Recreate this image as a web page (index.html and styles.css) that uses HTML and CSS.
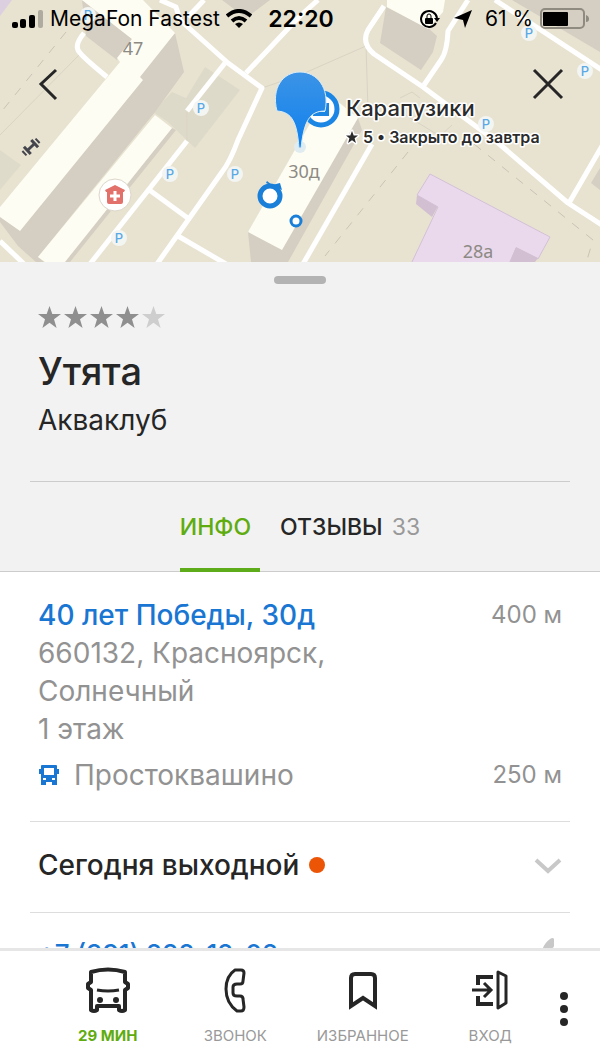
FILE: index.html
```html
<!DOCTYPE html>
<html lang="ru">

<head>
  <meta charset="UTF-8">
  <meta name="viewport" content="width=device-width, initial-scale=1.0">
  <title>Утята, акваклуб</title>
  <link rel="stylesheet" href="styles.css">
</head>

<body>
  <div class="map">
    <svg class="map-canvas" viewBox="0 0 600 262">
      <defs>
        <linearGradient id="pinFill" x1="0" y1="0" x2="0" y2="1">
          <stop offset="0" stop-color="#3c94e6" />
          <stop offset="1" stop-color="#0e80ee" />
        </linearGradient>
        <g id="parking">
          <circle r="8" fill="#f3f5f2" />
          <text y="5" text-anchor="middle">P</text>
        </g>
      </defs>

      <rect width="600" height="262" fill="#e8e3d1" />
      <path d="M0 0H12L0 16Z" fill="#dccfe0" />
      <path d="M0 150L21 165L0 190Z" fill="#dfdbca" />
      <path d="M205 67L240 90L195 148L168 122L153 112L172 92L186 98Z" fill="#dedac9" />

      <!-- paths and kerbs -->
      <g class="kerb">
        <path d="M82 52L0 135" />
        <path d="M187 112V141" />
        <path d="M262 88L300 75L366 46L368 110" />
        <path d="M400 98L412 92L420 98M395 108L410 118L440 136L452 125" />
      </g>
      <g class="footpath">
        <path d="M66 32L2 111" />
        <path d="M408 152L325 256" />
        <path d="M474 144L593 240L587 260" />
      </g>

      <!-- roads -->
      <g class="road">
        <path d="M160 0L176 7L180 20L228 63L262 88L238 140Q230 162 222 172L157 264" />
        <path d="M204 0L188 17" />
        <path d="M246 73L300 16L318 0" />
        <path d="M225 63L187 111" />
        <path d="M84 33Q75 44 78 50Q80 55 107 77" />
        <path d="M187 141L90 264" />
        <path d="M148 189L189 219" />
        <path d="M178 236L226 264" />
        <path d="M0 241L24 264" />
        <path d="M384 6L368 30Q361 43 374 54L423 87L497 142L568 203L602 225" />
        <path d="M468 0L448 31Q447 52 441 60L424 85" />
        <path d="M495 0L602 70" />
        <path d="M569 203L602 146" />
        <path d="M372 144L303 264" />
      </g>

      <!-- buildings -->
      <g fill="#d5cec2">
        <path d="M82 0L132 39L117 60L86 36Z" />
        <path d="M175 33L184 72L155 112L38 257L44 262H36L18 246L0 222V217L20 200Z" />
        <path d="M172 128L176 130L70 262H64Z" />
        <path d="M222 0H270L246 18Z" />
        <path d="M386 7L428 28L437 36L433 52L421 70L380 43Z" />
        <path d="M512 0H600V52Z" />
        <path d="M600 168L591 183L600 190Z" />
        <path d="M358 118L362 130L288 262H251L248 232Z" />
      </g>
      <g fill="#fdfdf3">
        <path d="M82 0H143L175 33L140 77L143 80L20 231L0 217V207L120 62L117 58L132 39Z" />
        <path d="M155 115L172 128L65 262H45L38 257Z" />
        <path d="M387 0H445L443 12L428 29L387 7Z" />
        <path d="M320 106L336 100L358 118L282 250L248 232Z" />
      </g>
      <path d="M417 195L438 206L432 217L416 204Z" fill="#d2bfd1" />
      <path d="M430 174L550 237L538 259L516 248L509 264H411L438 207L417 195Z" fill="#ead9ec" stroke="#d3c0d6" />
      <path d="M516 247L538 258L535 262H510Z" fill="#d2bfd1" />

      <g class="house-number">
        <text x="133" y="55">47</text>
        <text x="304" y="178">30д</text>
        <text x="478" y="258">28а</text>
      </g>

      <g class="parking">
        <use href="#parking" x="88" y="15" />
        <use href="#parking" x="201" y="108" />
        <use href="#parking" x="170" y="174" />
        <use href="#parking" x="235" y="174" />
        <use href="#parking" x="119" y="238" />
        <use href="#parking" x="529" y="33" />
        <use href="#parking" x="585" y="71" />
        <use href="#parking" x="486" y="124" />
      </g>

      <!-- gym -->
      <g transform="translate(31 147) rotate(-43)" stroke="#45454d" fill="none">
        <path d="M-4 0H4" stroke-width="3" />
        <path d="M-5 -5V5M5 -5V5" stroke-width="3" />
        <path d="M-9 -3V3M9 -3V3" stroke-width="2" />
      </g>

      <!-- clinic -->
      <circle cx="115" cy="195" r="16" fill="#fff" stroke="#ddd6cb" />
      <path d="M105 190L115 185L125 190L124 192H123V202Q123 204 121 204H109Q107 204 107 202V192H106Z" fill="#e2706b" />
      <path d="M115 191V201M110 196H120" stroke="#fff" stroke-width="3" />

      <!-- places and the selected pin -->
      <circle cx="321" cy="109" r="16" fill="#fff" stroke="#1c86e5" stroke-width="5" />
      <path d="M327 103V114H313" fill="none" stroke="#1c86e5" stroke-width="4" />
      <path d="M266 183L267 181L272 185L280 183L282 190Z" fill="#1a7fd8" />
      <circle cx="270" cy="196" r="10" fill="#fff" stroke="#1a7fd8" stroke-width="5" />
      <circle cx="296" cy="221" r="5" fill="#fff" stroke="#1a7fd8" stroke-width="3" />
      <circle cx="300" cy="147" r="6" fill="#e0ecf0" />
      <path d="M277 111C271 88 283 72 300 72S330 88 325 111C309 111 304 122 301 148H299C297 122 292 112 277 111Z" fill="url(#pinFill)" stroke="#d9ebf5" />

      <g class="place">
        <text class="place-name" x="346" y="116">Карапузики</text>
        <path d="M352 131L353.700 135.500H358L354.600 138.300L355.900 143L352 140.200L348.100 143L349.400 138.300L346 135.500H350.300Z" />
        <text class="place-note" x="363" y="143">5 • Закрыто до завтра</text>
      </g>
    </svg>

    <div class="status-bar">
      <div class="status-left">
        <svg width="32" height="20" viewBox="0 0 32 20">
          <rect x="0" y="13" width="6" height="6" rx="2" />
          <rect x="8" y="10" width="6" height="9" rx="2" />
          <rect x="17" y="6" width="6" height="13" rx="2" />
          <rect x="26" y="1" width="5" height="18" rx="2" fill="#b0ab9f" />
        </svg>
        <span class="carrier">MegaFon Fastest</span>
        <svg width="26" height="20" viewBox="0 0 26 20" fill="none" stroke="#000" stroke-width="4">
          <path d="M1 7Q13 -3 25 7" />
          <path d="M6 12Q13 6 20 12" />
          <path d="M13 19L9 15Q13 12 17 15Z" fill="#000" stroke="none" />
        </svg>
      </div>
      <span class="clock">22:20</span>
      <div class="status-right">
        <svg width="22" height="20" viewBox="0 0 22 20">
          <path d="M17 14A8 8 0 1 1 18 9" fill="none" stroke="#000" stroke-width="2" />
          <path d="M15 9H21L18 13Z" />
          <rect x="6" y="9" width="8" height="6" rx="1" />
          <path d="M8 9V7Q8 5 10 5T12 7V9" fill="none" stroke="#000" stroke-width="1" />
        </svg>
        <svg width="18" height="18" viewBox="0 0 18 18">
          <path d="M18 0L11 18L9 10L0 8Z" />
        </svg>
        <span class="percent">61 %</span>
        <svg width="50" height="22" viewBox="0 0 50 22">
          <rect x="1" y="1" width="43" height="19" rx="4" fill="none" stroke="#8f8b80" stroke-width="2" />
          <rect x="3" y="4" width="25" height="14" rx="1" />
          <path d="M46 7Q49 8 49 11T46 14Z" fill="#8f8b80" />
        </svg>
      </div>
    </div>

    <div class="map-controls">
      <button class="icon-button" aria-label="Назад">
        <svg width="36" height="36" viewBox="0 0 36 36" fill="none" stroke="#262626" stroke-width="3">
          <path d="M26 4L11 18L26 33" />
        </svg>
      </button>
      <button class="icon-button" aria-label="Закрыть">
        <svg width="36" height="36" viewBox="0 0 36 36" fill="none" stroke="#262626" stroke-width="3">
          <path d="M4 4L32 32M32 4L4 32" />
        </svg>
      </button>
    </div>
  </div>

  <main class="card">
    <header class="card-header">
      <div class="handle"></div>
      <div class="summary">
        <svg class="rating" width="128" height="22" viewBox="0 0 128 22" role="img" aria-label="4 из 5">
          <defs>
            <path id="star" d="M11.500 0L14.300 8H23L16 13.200L18.600 22L11.500 16.700L4.400 22L7 13.200L0 8H8.700Z" />
          </defs>
          <g fill="#8f8f8f">
            <use href="#star" />
            <use href="#star" x="26" />
            <use href="#star" x="52" />
            <use href="#star" x="78" />
          </g>
          <use href="#star" x="104" fill="#cecece" />
        </svg>
        <h1>Утята</h1>
        <p class="category">Акваклуб</p>
      </div>
      <nav class="tabs">
        <a class="tab active" href="#info">Инфо</a>
        <a class="tab" href="#reviews">Отзывы <span class="count">33</span></a>
      </nav>
    </header>

    <section class="address" id="info">
      <div class="row">
        <a class="link" href="#map">40 лет Победы, 30д</a>
        <span class="distance">400 м</span>
      </div>
      <p>660132, Красноярск,<br>Солнечный<br>1 этаж</p>
      <div class="row stop">
        <svg width="22" height="20" viewBox="0 0 22 20" fill="#1976d2">
          <path d="M4 0H18Q19 0 19 1V4H21V9H19V20H14V17H8V20H3V9H1V4H3V1Q3 0 4 0ZM6 3V10H16V3ZM5 13V15H8V13ZM14 13V15H17V13Z" fill-rule="evenodd" />
        </svg>
        <span class="stop-name">Простоквашино</span>
        <span class="distance">250 м</span>
      </div>
    </section>

    <section class="hours">
      <button class="hours-toggle">
        <span>Сегодня выходной</span>
        <span class="dot"></span>
        <svg class="chevron" width="28" height="18" viewBox="0 0 28 18" fill="none" stroke="#c8c8c8" stroke-width="4">
          <path d="M2 4L14 15L26 4" />
        </svg>
      </button>
    </section>

    <section class="phone row">
      <a class="link" href="tel:+73912821202">+7 (391) 282-12-02</a>
      <svg class="phone-icon" width="22" height="34" viewBox="0 0 22 34" fill="#c8c8c8">
        <path d="M10 2Q13 0 14 2V9Q14 11 10 12V22Q14 23 14 25V32Q13 34 10 32Q2 26 2 17T10 2Z" />
      </svg>
    </section>
  </main>

  <nav class="bottom-bar">
    <a class="item current" href="#route">
      <svg width="46" height="48" viewBox="0 0 46 48" fill="none" stroke="#262626" stroke-width="4" stroke-linejoin="round">
        <path d="M6 6Q23 1 40 6V16L43 18V22L40 24V44Q37 46 34 44V40H12V44Q9 46 6 44V24L3 22V18L6 16Z" />
        <path d="M12 24Q23 26 34 24" stroke-width="3" />
        <circle cx="15" cy="34" r="3" fill="#262626" stroke="none" />
        <circle cx="31" cy="34" r="3" fill="#262626" stroke="none" />
      </svg>
      <span>29 мин</span>
    </a>
    <a class="item" href="#call">
      <svg width="24" height="48" viewBox="0 0 24 48" fill="none" stroke="#262626" stroke-width="3" stroke-linejoin="round">
        <path d="M12 4H18Q21 4 21 7L20 15Q20 18 17 18H14Q10 18 10 21V27Q10 30 14 30H17Q20 30 20 33L21 41Q21 45 18 45H14Q3 37 3 23Q3 10 12 4Z" />
      </svg>
      <span>Звонок</span>
    </a>
    <a class="item" href="#favorites">
      <svg width="30" height="48" viewBox="0 0 30 48" fill="none" stroke="#262626" stroke-width="4">
        <path d="M3 40V12Q3 8 7 8H23Q27 8 27 12V40L15 32Z" />
      </svg>
      <span>Избранное</span>
    </a>
    <a class="item" href="#login">
      <svg width="38" height="48" viewBox="0 0 38 48" fill="none" stroke="#262626" stroke-width="4">
        <path d="M22 11H7V19M7 30V38H22" />
        <path d="M1 24H20M13 17L20 24L13 31" stroke-width="3" />
        <path d="M27 6L35 10V37L27 42Z" stroke-width="3" stroke-linejoin="round" />
      </svg>
      <span>Вход</span>
    </a>
    <button class="more" aria-label="Ещё">
      <svg width="8" height="34" viewBox="0 0 8 34" fill="#262626">
        <circle cx="4" cy="4" r="4" />
        <circle cx="4" cy="17" r="4" />
        <circle cx="4" cy="30" r="4" />
      </svg>
    </button>
  </nav>
</body>

</html>
```

FILE: styles.css
```css
* {
  box-sizing: border-box;
}

body {
  font-family: Inter, "Liberation Sans", sans-serif;
  display: flex;
  flex-direction: column;
  height: 100vh;
  margin: 0;
  color: #262626;
  background-color: #fff;
}

h1,
p {
  margin: 0;
}

a {
  color: inherit;
  text-decoration: none;
}

svg {
  display: block;
  flex-shrink: 0;
}

button {
  font: inherit;
  color: inherit;
  padding: 0;
  border: none;
  background: none;
  cursor: pointer;
}

/* Map */

.map {
  position: relative;
  flex-shrink: 0;
}

.map-canvas {
  width: 100%;
  height: auto;
}

.road {
  fill: none;
  stroke: #fff;
  stroke-width: 5;
  stroke-linejoin: round;
}

.kerb {
  fill: none;
  stroke: #d9d3c3;
}

.footpath {
  fill: none;
  stroke: #c9c3b5;
  stroke-width: 1;
  stroke-dasharray: 9 9;
}

.house-number {
  font-family: "Noto Sans", sans-serif;
  font-size: 18px;
  fill: #8d8a84;
  text-anchor: middle;
}

.parking {
  font-size: 13px;
  font-weight: 500;
  fill: #5aa9e6;
}

.place {
  fill: #2b2b2b;
  stroke: #fff;
  stroke-width: 3;
  paint-order: stroke;
  stroke-linejoin: round;
}

.place-name {
  font-size: 22px;
  font-weight: 500;
}

.place-note {
  font-size: 16px;
  font-weight: 600;
}

.status-bar {
  position: absolute;
  top: 0;
  left: 0;
  right: 0;
  display: grid;
  grid-template-columns: 1fr auto 1fr;
  align-items: center;
  height: 37px;
  padding: 0 10px 0 12px;
  color: #000;
  font-size: 22px;
}

.status-left,
.status-right {
  display: flex;
  align-items: center;
  gap: 6px;
  white-space: nowrap;
}

.status-right {
  justify-content: flex-end;
  gap: 13px;
}

.carrier,
.percent {
  font-size: 21px;
}

.percent {
  margin-right: -6px;
}

.clock {
  font-size: 23px;
  font-weight: 600;
}

.map-controls {
  position: absolute;
  top: 66px;
  left: 30px;
  right: 34px;
  display: flex;
  justify-content: space-between;
}

/* Card */

.card {
  flex: 1;
  min-height: 0;
  overflow: hidden;
  font-size: 28px;
  line-height: 38px;
}

.card-header {
  padding-top: 14px;
  background-color: #f2f2f2;
  border-bottom: 1px solid #ccc;
}

.handle {
  width: 52px;
  height: 8px;
  margin: 0 auto;
  border-radius: 4px;
  background-color: #b3b3b3;
}

.summary {
  margin: 0 30px;
  padding: 22px 8px 42px;
  border-bottom: 1px solid #ccc;
}

h1 {
  margin-top: 19px;
  font-size: 38px;
  font-weight: 500;
  line-height: 48px;
}

.category {
  margin-top: 6px;
}

.tabs {
  display: flex;
  justify-content: center;
  gap: 20px;
}

.tab {
  padding: 26px 0 22px;
  margin-bottom: -1px;
  font-size: 23px;
  font-weight: 500;
  text-transform: uppercase;
  border-bottom: 4px solid transparent;
}

.tab.active {
  padding-right: 9px;
  color: #5fac10;
  border-bottom-color: #5fac1a;
}

.count {
  margin-left: 3px;
  color: #999;
  font-weight: 400;
}

.row {
  display: flex;
  align-items: center;
}

.link {
  color: #1976d2;
  font-weight: 500;
}

.distance {
  margin-left: auto;
  font-size: 24px;
}

.address,
.hours,
.phone {
  margin: 0 30px;
  padding: 0 8px;
  border-bottom: 1px solid #ddd;
}

.address {
  padding-top: 24px;
  padding-bottom: 27px;
  color: #929292;
}

.stop {
  margin-top: 8px;
}

.stop-name {
  margin-left: 14px;
}

.hours-toggle {
  display: flex;
  align-items: center;
  width: 100%;
  padding: 24px 0 28px;
  font-weight: 500;
}

.dot {
  width: 16px;
  height: 16px;
  margin-left: 10px;
  border-radius: 50%;
  background-color: #eb5505;
}

.chevron {
  margin-left: auto;
}

.phone {
  padding-top: 22px;
  padding-bottom: 24px;
  font-size: 26px;
}

.phone-icon {
  margin-left: auto;
}

/* Bottom bar */

.bottom-bar {
  display: grid;
  grid-template-columns: repeat(4, 1fr) 20px;
  flex-shrink: 0;
  padding: 15px 26px 17px 44px;
  border-top: 3px solid #e6e6e6;
  background-color: #fff;
}

.item {
  display: flex;
  flex-direction: column;
  align-items: center;
  gap: 12px;
  color: #999;
  font-size: 15px;
  line-height: 20px;
  text-transform: uppercase;
}

.item.current {
  color: #5fac10;
  font-weight: 700;
}

.more {
  display: flex;
  justify-content: center;
  align-items: center;
  padding-top: 6px;
}
```
